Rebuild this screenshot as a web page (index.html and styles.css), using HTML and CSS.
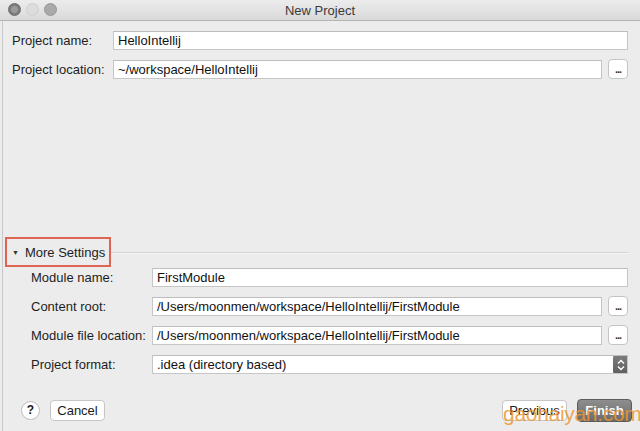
FILE: index.html
```html
<!DOCTYPE html>
<html>
<head>
<meta charset="utf-8">
<title>New Project</title>
<link rel="stylesheet" href="styles.css">
</head>
<body>
<div class="window">
  <div class="titlebar">
    <div class="lights">
      <span class="light l1"></span>
      <span class="light l2"></span>
      <span class="light l3"></span>
    </div>
    <div class="title">New Project</div>
  </div>

  <div class="form top">
    <label class="lbl">Project name:</label>
    <div class="field"><div class="input">HelloIntellij</div></div>
    <label class="lbl">Project location:</label>
    <div class="field"><div class="input">~/workspace/HelloIntellij</div><div class="browse">...</div></div>
  </div>

  <div class="spacer"></div>

  <div class="more">
    <div class="more-box"><span class="tri">▼</span>More Settings</div>
    <div class="sep"></div>
  </div>

  <div class="form module">
    <label class="lbl">Module name:</label>
    <div class="field"><div class="input">FirstModule</div></div>
    <label class="lbl">Content root:</label>
    <div class="field"><div class="input">/Users/moonmen/workspace/HelloIntellij/FirstModule</div><div class="browse">...</div></div>
    <label class="lbl">Module file location:</label>
    <div class="field"><div class="input">/Users/moonmen/workspace/HelloIntellij/FirstModule</div><div class="browse">...</div></div>
    <label class="lbl">Project format:</label>
    <div class="field"><div class="input select">.idea (directory based)<span class="stepper"><svg width="10" height="14" viewBox="0 0 10 14"><path d="M2 5.5 L5 2.5 L8 5.5 M2 8.5 L5 11.5 L8 8.5" fill="none" stroke="#fff" stroke-width="1.4"/></svg></span></div></div>
  </div>

  <div class="footer">
    <div class="help">?</div>
    <div class="btn cancel">Cancel</div>
    <div class="grow"></div>
    <div class="btn prev">Previous</div>
    <div class="btn finish">Finish</div>
  </div>

  <div class="watermark">gaohaiyan.com</div>
</div>
</body>
</html>
```

FILE: styles.css
```css
* { box-sizing: border-box; }
html, body { margin: 0; padding: 0; }
body {
  font-family: "Liberation Sans", Arial, sans-serif;
  font-size: 13px;
  color: #1a1a1a;
  background: #ececec;
}
.window {
  position: relative;
  width: 640px;
  height: 431px;
  background: #ececec;
  display: flex;
  flex-direction: column;
  overflow: hidden;
}
.window::before {
  content: "";
  position: absolute;
  left: 2px; top: 21px; bottom: 0;
  width: 1px;
  background: #c9c9c9;
}
.titlebar {
  height: 21px;
  flex: none;
  position: relative;
  background: linear-gradient(#ececec, #d9d9d9);
  border-bottom: 1px solid #b4b4b4;
  display: flex;
  align-items: center;
  justify-content: center;
}
.lights {
  position: absolute;
  left: 8px; top: 3px;
  display: flex;
  gap: 5px;
}
.light {
  width: 13px; height: 13px;
  border-radius: 50%;
  display: block;
}
.l1 { background: radial-gradient(circle, #9a9a9a 0 3px, #7c7c7c 4px); border: 1px solid #6a6a6a; }
.l2 { background: #dcdcdc; border: 1px solid #cfcfcf; }
.l3 { background: #a9a9a9; border: 1px solid #979797; }
.title {
  font-size: 13px;
  color: #3a3a3a;
}
.form {
  display: grid;
  row-gap: 10px;
  padding-right: 12px;
  flex: none;
}
.top {
  padding-top: 10px;
  padding-left: 12px;
  grid-template-columns: 101px 1fr;
}
.module {
  margin-top: 1px;
  padding-left: 31px;
  grid-template-columns: 121px 1fr;
}
.lbl {
  height: 19px;
  line-height: 19px;
  white-space: nowrap;
  color: #1e1e1e;
}
.field {
  display: flex;
  gap: 6px;
  height: 19px;
}
.input {
  flex: 1;
  height: 19px;
  line-height: 17px;
  background: #fff;
  border: 1px solid #c6c6c6;
  border-top-color: #bdbdbd;
  padding-left: 4px;
  white-space: nowrap;
  overflow: hidden;
  position: relative;
  color: #111;
}
.browse {
  width: 20px;
  height: 20px;
  margin-top: -1px;
  background: #fff;
  border: 1px solid #c4c4c4;
  border-radius: 4px;
  font-size: 11px;
  font-weight: bold;
  text-align: center;
  line-height: 19px;
  letter-spacing: -1px;
  color: #333;
}
.select { padding-right: 16px; }
.stepper {
  position: absolute;
  right: -1px; top: -1px;
  width: 15px; height: 19px;
  background: linear-gradient(#7d7d7d, #5e5e5e);
  border-radius: 3px;
  display: flex;
  align-items: center;
  justify-content: center;
}
.spacer { flex: 1; }
.more {
  flex: none;
  height: 30px;
  display: flex;
  align-items: center;
  padding-left: 5px;
  padding-right: 12px;
}
.more-box {
  width: 106px;
  height: 30px;
  border: 2px solid #de6553;
  padding-left: 5px;
  display: flex;
  align-items: center;
  white-space: nowrap;
  color: #1e1e1e;
}
.tri {
  font-size: 7px;
  margin-right: 6px;
  margin-top: 1px;
  color: #333;
}
.sep {
  flex: 1;
  height: 2px;
  border-top: 1px solid #d2d2d2;
  border-bottom: 1px solid #f6f6f6;
  margin-top: 1px;
}
.footer {
  flex: none;
  margin-top: 24px;
  height: 24px;
  margin-bottom: 9px;
  display: flex;
  align-items: center;
  padding-left: 21px;
  padding-right: 8px;
}
.help {
  width: 19px; height: 19px;
  border-radius: 50%;
  background: #fff;
  border: 1px solid #bdbdbd;
  font-weight: bold;
  font-size: 12px;
  text-align: center;
  line-height: 17px;
  margin-right: 10px;
}
.btn {
  height: 21px;
  line-height: 19px;
  border-radius: 4px;
  text-align: center;
  white-space: nowrap;
}
.cancel {
  width: 55px;
  background: #fff;
  border: 1px solid #c6c6c6;
}
.grow { flex: 1; }
.prev {
  width: 65px;
  background: #fff;
  border: 1px solid #c6c6c6;
  margin-right: 10px;
}
.finish {
  width: 55px;
  height: 23px;
  line-height: 21px;
  background: linear-gradient(#8e8e8e, #6b6b6b);
  border: 1px solid #5c5c5c;
  color: #fff;
  font-weight: bold;
}
.watermark {
  position: absolute;
  left: 503px;
  top: 402px;
  font-family: "Liberation Sans", Arial, sans-serif;
  font-size: 21px;
  letter-spacing: -0.3px;
  color: rgba(236, 150, 50, 0.85);
  pointer-events: none;
}
```
